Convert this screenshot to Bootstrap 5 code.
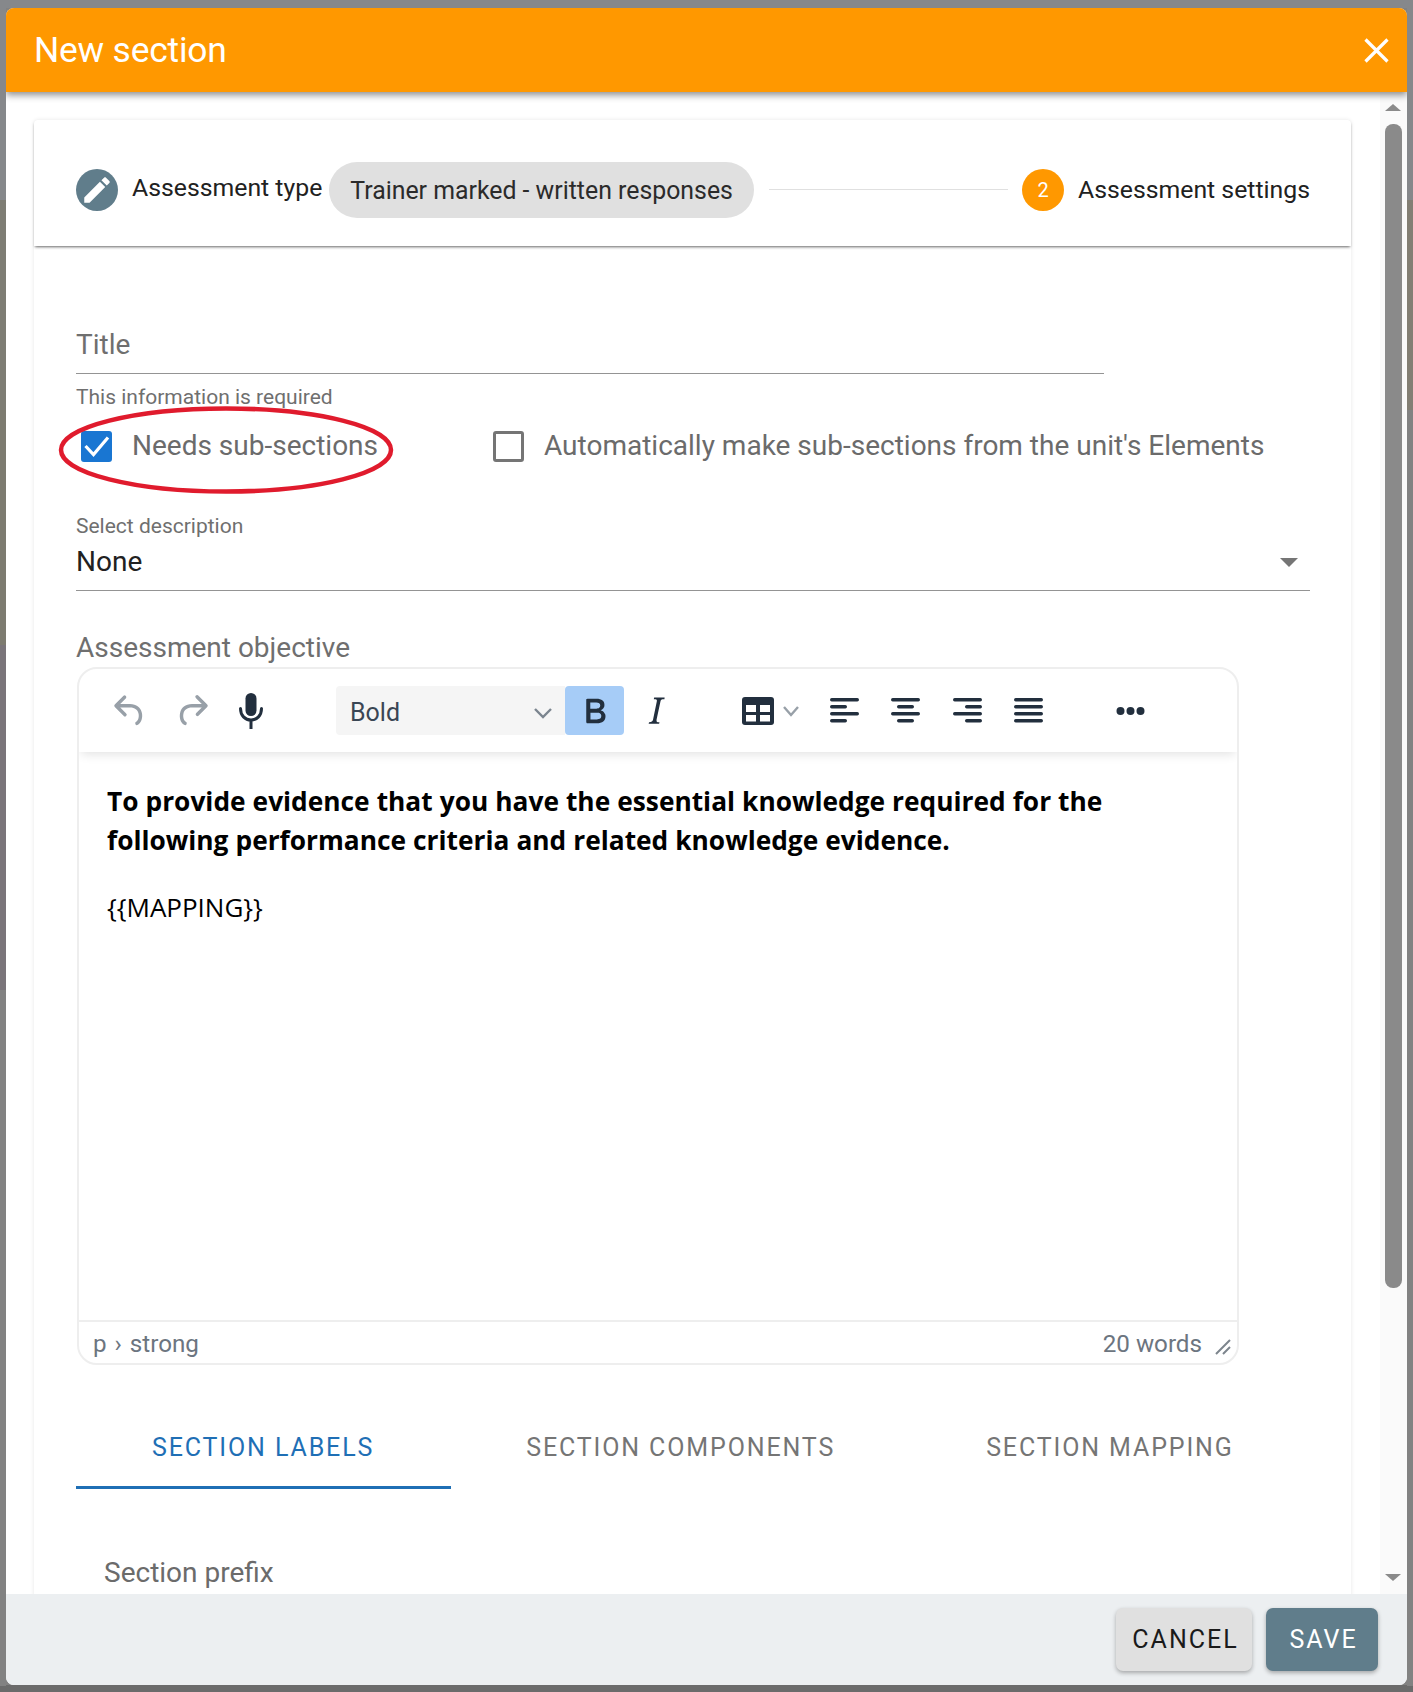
<!DOCTYPE html>
<html lang="en">
<head>
<meta charset="utf-8">
<title>New section</title>
<link rel="stylesheet" href="https://cdn.jsdelivr.net/npm/bootstrap@5.3.0/dist/css/bootstrap.min.css">
<style>
html,body{height:100%;overflow:hidden}
body{margin:0;font-family:Roboto,sans-serif;color:#212121;padding:8px 6px 7px;
 background-color:#828282;
 background-image:linear-gradient(#86888b 0 200px,#7e7d74 200px 410px,#7d7b70 410px 645px,#7a757a 645px 990px,#828282 990px 1686px,#6b6b6b 1686px),linear-gradient(#86888b 0 200px,#837f74 200px 410px,#828282 410px 1686px,#6b6b6b 1686px),linear-gradient(#86888b,#86888b),linear-gradient(#6b6b6b,#6b6b6b);
 background-size:6px 100%,6px 100%,100% 8px,100% 7px;background-position:left top,right top,left top,left bottom;background-repeat:no-repeat}
.dlg{height:1677px;border-radius:8px;overflow:hidden;background:#fff}
.dlg-head{height:84px;flex:none;background:#ff9800;color:#fff;padding:0 18px 0 28px;box-shadow:0 3px 7px rgba(0,0,0,.45);position:relative;z-index:2}
.dlg-title{font-size:35.4px;font-weight:400;margin:0;letter-spacing:-.2px;padding-top:1px}
.dlg-x{background:none;border:0;padding:0;line-height:0}
.dlg-mid{min-height:0}
.scroll-main{min-width:0;overflow:hidden;padding:28px 29px 0 28px}
.panel{box-shadow:0 0 4px rgba(0,0,0,.1);border-radius:4px;padding-bottom:400px;background:#fff}
.stepper{height:126px;padding:13px 41px 0 42px;box-shadow:0 2px 3px -1px rgba(0,0,0,.6);border-radius:4px 4px 0 0}
.step-ico{width:42px;height:42px;border-radius:50%;background:#607d8b;color:#fff;flex:none}
.step-two{background:#ff9800;font-size:20px}
.step-txt{font-size:24.8px;white-space:nowrap}
.step-type{margin-left:14px;position:relative;top:-2px}
.step-chip{height:56px;background:#e0e0e0;padding:2px 21px 0;border-radius:28px;font-size:24.85px;margin-left:7px;flex:none;white-space:nowrap;color:#2b2b2b}
.step-line{height:1px;background:#e0e0e0;margin:0 14px 0 15px}
.step-last{margin-left:14px}
.panel-body{padding:0 41px 0 42px}
.fld-title{width:1028px;height:54px;margin-top:74px;border-bottom:1px solid #949494;font-size:28px;line-height:50px;color:#6f6f6f}
.fld-help{font-size:21px;line-height:24px;color:#6f6f6f;margin-top:11px}
.check-row{height:48px;margin-top:13px;position:relative}
.check-box.form-check-input{width:31px;height:31px;margin:0;flex:none;border:3px solid #757575;border-radius:3px}
.check-box.form-check-input:checked{background-color:#1976d2;border:0;background-size:100%;background-image:url("data:image/svg+xml,%3csvg xmlns='http://www.w3.org/2000/svg' viewBox='0 0 31 31'%3e%3cpath fill='none' stroke='%23fff' stroke-width='3.200' d='M4.500 15l8 8.500L27 6.500'/%3e%3c/svg%3e")}
.check-txt{font-size:28px;color:#6b6b6b;white-space:nowrap}
.check-one{margin-left:5px;width:412px;gap:20px}
.check-two{gap:20px}
.ring{position:absolute;left:-18px;top:-17px;width:340px;height:90px;pointer-events:none}
.sel-label{font-size:21px;line-height:24px;color:#6f6f6f;margin-top:44px}
.sel-val{height:53px;border-bottom:1px solid #949494;font-size:28px;line-height:48px;color:#212121;padding-bottom:4px}
.sel-caret{width:0;height:0;border-left:9px solid transparent;border-right:9px solid transparent;border-top:9px solid #757575;margin-right:12px}
.obj-label{font-size:28px;line-height:32px;color:#6f6f6f;margin-top:41px}
.ed{width:1162px;height:698px;margin-top:3px;margin-left:1px;border:2px solid #eeeeee;border-radius:20px;overflow:hidden}
.ed-bar{height:83px;flex:none;box-shadow:0 4px 10px -2px rgba(0,0,0,.12);position:relative;color:#222f3e;padding-left:30px}
.ed-ico{flex:none;display:block}
.ed-redo{margin-left:20px}
.ed-mic{margin-left:25px}
.ed-sel{width:229px;height:49px;background:#f5f5f5;font-size:25px;padding:4px 12px 0 14px;border-radius:4px 0 0 4px;margin-left:72px;color:#3a4654}
.ed-bold{width:59px;height:49px;background:#a6ccf7;border-radius:4px}
.ed-italic{margin-left:10px}
.ed-table{margin-left:64px}
.ed-chev{margin-left:8px}
.ed-al{margin-left:30px}
.ed-ac{margin-left:32px}
.ed-ar{margin-left:33px}
.ed-aj{margin-left:32px}
.ed-dots{margin-left:73px}
.ed-body{font-family:"Open Sans",sans-serif;color:#000;padding:30px 28px 0;line-height:39px;min-height:0}
.ed-strong{font-weight:700;margin:0 0 28px;font-size:26.3px;word-spacing:.2px}
.ed-plain{margin:0;font-size:26px}
.ed-foot{height:43px;flex:none;border-top:2px solid #eeeeee;font-size:24.2px;color:#6c7580;padding:3px 6px 0 14px}
.ed-path{word-spacing:2px}
.ed-grip{margin-top:6px;margin-left:5px}
.tab-row{margin-top:40px;height:84px}
.tab-item{padding:24px 76px 0 75px;font-size:25px;letter-spacing:1.87px;color:#757575;border-bottom:3px solid transparent;white-space:nowrap}
.tab-on{color:#1f6fb5;border-bottom-color:#1f6fb5;padding-left:76px;padding-right:77px}
.prefix{font-size:28px;line-height:32px;color:#6b6b6b;margin:68px 0 0 28px}
.sbar{width:27px;flex:none;background:#fafafa;padding:12px 5px 13px}
.sb-up,.sb-dn{width:0;height:0;border-left:8.5px solid transparent;border-right:8.5px solid transparent}
.sb-up{border-bottom:7px solid #8a8a8a}
.sb-dn{border-top:7px solid #8a8a8a}
.sb-thumb{height:1164px;background:#8a8a8a;margin-top:13px;border-radius:8px}
.dlg-foot{height:91px;flex:none;background:#eceff1;padding:14px 29px 0 0;position:relative;z-index:2}
.act{height:63px;font-size:25px;letter-spacing:2px;border-radius:7px;box-shadow:0 2px 4px rgba(0,0,0,.3);border:0;padding:0 0 0 3px}
.act-cancel{width:136px;background:#e0e0e0;color:#1a1a1a;margin-right:14px}
.act-save{width:112px;background:#607d8b;color:#fff}
</style>
</head>
<body>
<div class="dlg d-flex flex-column">
  <div class="dlg-head d-flex align-items-center justify-content-between">
    <h5 class="dlg-title">New section</h5>
    <button class="dlg-x" type="button" aria-label="Close"><svg width="25" height="25" viewBox="0 0 25 25"><path d="M1.5 1.5l22 22M23.500 1.500l-22 22" stroke="#fff" stroke-width="3.200" fill="none"/></svg></button>
  </div>
  <div class="dlg-mid flex-grow-1 d-flex">
    <div class="scroll-main flex-grow-1">
      <div class="panel card border-0">
        <div class="stepper d-flex align-items-center">
          <span class="step-ico d-flex align-items-center justify-content-center">
            <svg width="34" height="34" viewBox="0 0 24 24" fill="#fff"><path d="M3 17.25V21h3.750L17.810 9.940l-3.750-3.750L3 17.250zM20.710 7.040c.39-.39.39-1.020 0-1.410l-2.340-2.340c-.39-.39-1.020-.39-1.410 0l-1.830 1.830 3.750 3.750 1.830-1.830z"/></svg>
          </span>
          <span class="step-txt step-type">Assessment type</span>
          <span class="step-chip d-flex align-items-center">Trainer marked - written responses</span>
          <span class="step-line flex-grow-1"></span>
          <span class="step-ico step-two d-flex align-items-center justify-content-center">2</span>
          <span class="step-txt step-last">Assessment settings</span>
        </div>
        <div class="panel-body">
          <div class="fld-title">Title</div>
          <div class="fld-help">This information is required</div>
          <div class="check-row d-flex align-items-center">
            <label class="check-one d-flex align-items-center">
              <input class="check-box form-check-input" type="checkbox" checked>
              <span class="check-txt">Needs sub-sections</span>
            </label>
            <label class="check-two d-flex align-items-center">
              <input class="check-box form-check-input" type="checkbox">
              <span class="check-txt">Automatically make sub-sections from the unit's Elements</span>
            </label>
            <svg class="ring" viewBox="0 0 340 90"><ellipse cx="168" cy="45" rx="165" ry="41.500" fill="none" stroke="#e01b2d" stroke-width="4.500"/></svg>
          </div>
          <div class="sel-label">Select description</div>
          <div class="sel-val d-flex align-items-center justify-content-between"><span>None</span><span class="sel-caret"></span></div>
          <div class="obj-label">Assessment objective</div>
          <div class="ed d-flex flex-column">
            <div class="ed-bar d-flex align-items-center">
              <svg class="ed-ico" width="42" height="42" viewBox="0 0 24 24" fill="#98a0a8"><path d="M6.400 8H12c3.700 0 6.200 2 6.800 5.100.6 2.700-.4 5.600-2.300 6.800a1 1 0 0 1-1-1.800c1.100-.6 1.800-2.700 1.400-4.600-.5-2.100-2.100-3.500-4.900-3.500H6.400l3.300 3.300a1 1 0 1 1-1.400 1.400l-5-5a1 1 0 0 1 0-1.400l5-5a1 1 0 0 1 1.400 1.400L6.400 8Z"/></svg>
              <svg class="ed-ico ed-redo" width="42" height="42" viewBox="0 0 24 24" fill="#98a0a8"><path d="M17.600 10H12c-2.800 0-4.400 1.400-4.900 3.500-.4 2 .3 4 1.400 4.600a1 1 0 1 1-1 1.800c-2-1.200-2.900-4.100-2.300-6.800.6-3 3-5.100 6.800-5.100h5.600l-3.300-3.300a1 1 0 1 1 1.400-1.400l5 5a1 1 0 0 1 0 1.400l-5 5a1 1 0 0 1-1.400-1.400l3.300-3.300Z"/></svg>
              <svg class="ed-ico ed-mic" width="26" height="36" viewBox="0 0 26 36" fill="#222f3e"><rect x="7.500" y="0" width="11" height="23" rx="5.500"/><path d="M2.500 15.500c0 7 4.500 11.500 10.500 11.500s10.500-4.500 10.500-11.500" fill="none" stroke="#222f3e" stroke-width="3" stroke-linecap="round"/><rect x="11.500" y="26" width="3" height="10"/></svg>
              <div class="ed-sel d-flex align-items-center justify-content-between"><span>Bold</span><svg width="20" height="12" viewBox="0 0 20 12"><path d="M2 2l8 8 8-8" fill="none" stroke="#7b858f" stroke-width="2.400"/></svg></div>
              <div class="ed-bold d-flex align-items-center justify-content-center"><svg width="42" height="42" viewBox="0 0 24 24" fill="#222f3e"><path d="M7.800 19c-.3 0-.5 0-.6-.2l-.2-.5V5.700c0-.2 0-.4.2-.5l.6-.2h5c1.500 0 2.700.3 3.500 1 .7.6 1.100 1.400 1.100 2.500a3 3 0 0 1-.6 1.900c-.4.6-1 1-1.600 1.200.4.1.9.3 1.300.6s.8.7 1 1.200c.4.4.5 1 .5 1.600 0 1.300-.4 2.300-1.300 3-.8.7-2.100 1-3.800 1H7.800Zm5-8.300c.6 0 1.200-.1 1.600-.5.4-.3.6-.7.6-1.300 0-1.100-.8-1.700-2.300-1.700H9.300v3.500h3.400Zm.5 6c.7 0 1.300-.1 1.700-.4.4-.4.6-.9.6-1.500s-.2-1-.7-1.400c-.4-.3-1-.4-2-.4H9.400v3.800h4Z"/></svg></div>
              <svg class="ed-ico ed-italic" width="44" height="44" viewBox="0 0 24 24" fill="#222f3e"><path d="M16.700 4.700l-.1.9h-.3c-.6 0-1 0-1.400.3-.3.3-.4.6-.5 1.100l-2.100 9.800v.6c0 .5.4.8 1.400.8h.2l-.2.8H8l.2-.8h.2c1.100 0 1.800-.5 2-1.500l2-9.800.1-.5c0-.6-.4-.8-1.400-.8h-.3l.2-.9h5.800Z"/></svg>
              <svg class="ed-ico ed-table" width="32" height="28" viewBox="0 0 32 28"><rect width="32" height="28" rx="3" fill="#222f3e"/><rect x="4" y="8" width="10" height="7" fill="#fff"/><rect x="18" y="8" width="10" height="7" fill="#fff"/><rect x="4" y="18" width="10" height="6.500" fill="#fff"/><rect x="18" y="18" width="10" height="6.500" fill="#fff"/></svg>
              <svg class="ed-ico ed-chev" width="18" height="12" viewBox="0 0 18 12"><path d="M2 2l7 8 7-8" fill="none" stroke="#98a0a8" stroke-width="2.400"/></svg>
              <svg class="ed-ico ed-al" width="29" height="25" viewBox="0 0 29 25" fill="#222f3e"><rect width="29" height="3.500" rx="1.700"/><rect y="7" width="17" height="3.500" rx="1.700"/><rect y="14" width="29" height="3.500" rx="1.700"/><rect y="21" width="17" height="3.500" rx="1.700"/></svg>
              <svg class="ed-ico ed-ac" width="29" height="25" viewBox="0 0 29 25" fill="#222f3e"><rect width="29" height="3.500" rx="1.700"/><rect x="6" y="7" width="17" height="3.500" rx="1.700"/><rect y="14" width="29" height="3.500" rx="1.700"/><rect x="6" y="21" width="17" height="3.500" rx="1.700"/></svg>
              <svg class="ed-ico ed-ar" width="29" height="25" viewBox="0 0 29 25" fill="#222f3e"><rect width="29" height="3.500" rx="1.700"/><rect x="12" y="7" width="17" height="3.500" rx="1.700"/><rect y="14" width="29" height="3.500" rx="1.700"/><rect x="12" y="21" width="17" height="3.500" rx="1.700"/></svg>
              <svg class="ed-ico ed-aj" width="29" height="25" viewBox="0 0 29 25" fill="#222f3e"><rect width="29" height="3.500" rx="1.700"/><rect y="7" width="29" height="3.500" rx="1.700"/><rect y="14" width="29" height="3.500" rx="1.700"/><rect y="21" width="29" height="3.500" rx="1.700"/></svg>
              <svg class="ed-ico ed-dots" width="29" height="10" viewBox="0 0 29 10" fill="#222f3e"><circle cx="4.500" cy="5" r="4"/><circle cx="14.500" cy="5" r="4"/><circle cx="24.500" cy="5" r="4"/></svg>
            </div>
            <div class="ed-body flex-grow-1">
              <p class="ed-strong">To provide evidence that you have the essential knowledge required for the following performance criteria and related knowledge evidence.</p>
              <p class="ed-plain">{{MAPPING}}</p>
            </div>
            <div class="ed-foot d-flex align-items-center justify-content-between">
              <span class="ed-path">p › strong</span>
              <span class="d-flex align-items-center gap-2">20 words <svg width="16" height="16" viewBox="0 0 16 16" class="ed-grip"><path d="M1 15L15 1M8 15l7-7" stroke="#7d858d" stroke-width="2" fill="none"/></svg></span>
            </div>
          </div>
          <div class="tab-row d-flex">
            <div class="tab-item tab-on">SECTION LABELS</div>
            <div class="tab-item">SECTION COMPONENTS</div>
            <div class="tab-item">SECTION MAPPING</div>
          </div>
          <div class="prefix">Section prefix</div>
        </div>
      </div>
    </div>
    <div class="sbar d-flex flex-column">
      <div class="sb-up"></div>
      <div class="sb-thumb"></div>
      <div class="sb-dn mt-auto"></div>
    </div>
  </div>
  <div class="dlg-foot d-flex justify-content-end align-items-start">
    <button class="btn act act-cancel" type="button">CANCEL</button>
    <button class="btn act act-save" type="button">SAVE</button>
  </div>
</div>
<script src="https://cdn.jsdelivr.net/npm/bootstrap@5.3.0/dist/js/bootstrap.bundle.min.js"></script>
</body>
</html>
